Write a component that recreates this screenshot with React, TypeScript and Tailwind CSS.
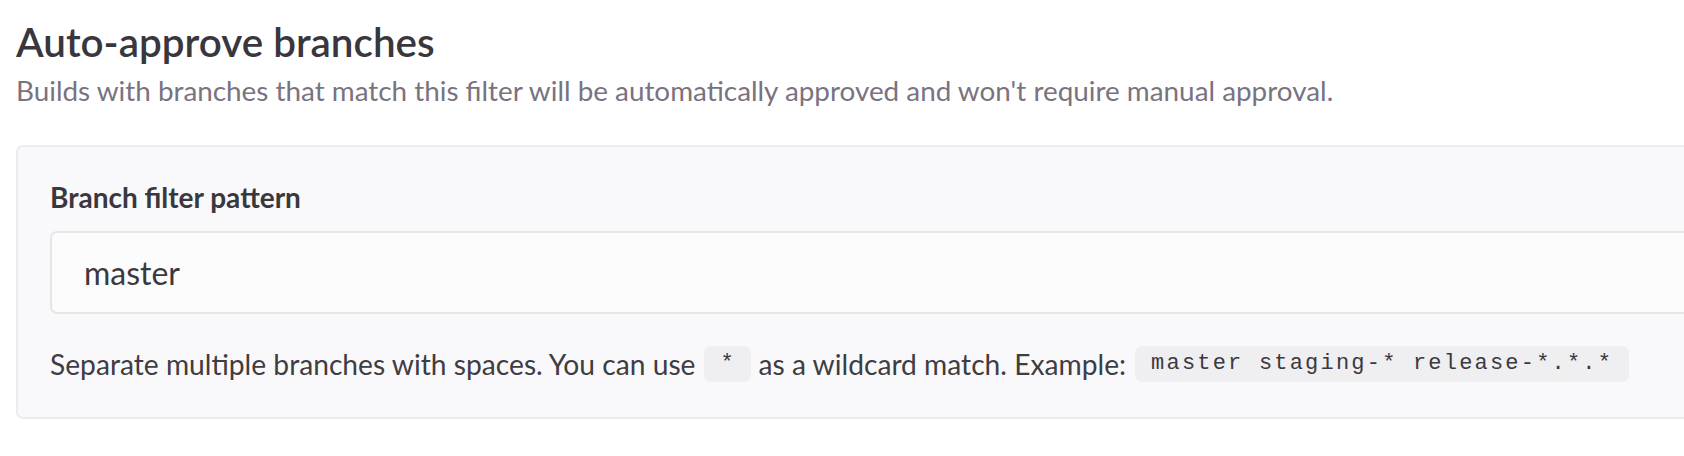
export default function App() {
  const sans = { fontFamily: 'Lato, "Open Sans", sans-serif' };
  const mono = { fontFamily: '"Liberation Mono", "DejaVu Sans Mono", monospace' };
  return (
    <div className="w-[1684px] h-[456px] overflow-hidden bg-white" style={sans}>
      <div className="pl-[16px] pt-[18px]">
        <h1 className="text-[40.4px] leading-[48px] font-semibold text-[#39363d]">
          Auto-approve branches
        </h1>
        <p className="mt-[7px] text-[27.85px] leading-[36px] text-[#79737f]">
          Builds with branches that match this filter will be automatically approved and won't require manual approval.
        </p>
        <div className="mt-[36px] w-[1800px] h-[274px] rounded-[7px] border-2 border-[#ececee] bg-[#f9f9fb] pl-[32px] pt-[32px]">
          <label className="block text-[28px] leading-[36px] font-bold text-[#3a383d]">
            Branch filter pattern
          </label>
          <div className="mt-[16px] h-[83px] rounded-[7px] border-2 border-[#e6e6e8] bg-[#fcfcfc] flex items-center pl-[32px]">
            <span className="text-[32px] text-[#3b393e]">master</span>
          </div>
          <div className="mt-[32px] h-[36px] flex items-center text-[28.2px] leading-[36px] text-[#3f3c42]">
            <span>Separate multiple branches with spaces. You can use</span>
            <code
              className="mx-[8px] h-[36px] w-[47px] rounded-[7px] bg-[#efeef1] flex items-center justify-center text-[22px] text-[#3b393e]"
              style={mono}
            >
              *
            </code>
            <span>as a wildcard match. Example:</span>
            <code
              className="ml-[9px] h-[36px] px-[16px] rounded-[7px] bg-[#efeef1] flex items-center text-[22px] tracking-[2.2px] text-[#3b393e]"
              style={mono}
            >
              master staging-* release-*.*.*
            </code>
          </div>
        </div>
      </div>
    </div>
  );
}
